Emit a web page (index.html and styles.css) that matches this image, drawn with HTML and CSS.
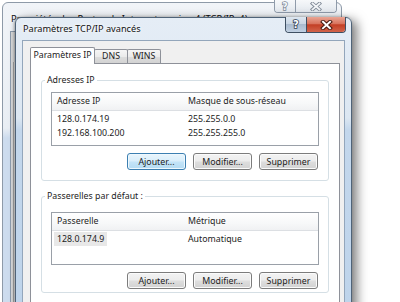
FILE: index.html
```html
<!DOCTYPE html>
<html lang="fr">
<head>
<meta charset="utf-8">
<title>Paramètres TCP/IP avancés</title>
<link rel="stylesheet" href="styles.css">
</head>
<body>
<div class="desktop">
  <div class="win back">
    <div class="titlebar back-titlebar">
      <span class="title back-title">Propriétés de : Protocole Internet version 4 (TCP/IPv4)</span>
      <div class="caption back-caption">
        <span class="cbtn help"><svg width="10" height="10" viewBox="0 0 10 10"><text x="5" y="8.5" text-anchor="middle" class="qmark qmark-inactive">?</text></svg></span>
        <span class="cbtn close"><svg width="12" height="9" viewBox="0 0 12 9"><path d="M2.5 1.5 L9.5 7.5 M9.5 1.5 L2.5 7.5" class="x-out x-out-inactive"/><path d="M2.5 1.5 L9.5 7.5 M9.5 1.5 L2.5 7.5" class="x-in x-in-inactive"/></svg></span>
      </div>
    </div>
    <div class="back-client"><div class="back-panel"></div></div>
  </div>

  <div class="win front">
    <div class="titlebar">
      <span class="title">Paramètres TCP/IP avancés</span>
      <div class="caption">
        <span class="cbtn help"><svg width="10" height="11" viewBox="0 0 10 11"><text x="5" y="9" text-anchor="middle" class="qmark">?</text></svg></span>
        <span class="cbtn close"><svg width="13" height="10" viewBox="0 0 13 10"><path d="M3 1.8 L10 8.2 M10 1.8 L3 8.2" class="x-out"/><path d="M3 1.8 L10 8.2 M10 1.8 L3 8.2" class="x-in"/></svg></span>
      </div>
    </div>
    <div class="client">
      <div class="tabs">
        <div class="tab active">Paramètres IP</div>
        <div class="tab">DNS</div>
        <div class="tab">WINS</div>
      </div>
      <div class="panel">
        <fieldset class="group group-ip">
          <legend>Adresses IP</legend>
          <div class="list">
            <div class="row head"><span class="c1">Adresse IP</span><span class="c2">Masque de sous-réseau</span></div>
            <div class="rows">
              <div class="row"><span class="c1">128.0.174.19</span><span class="c2">255.255.0.0</span></div>
              <div class="row"><span class="c1">192.168.100.200</span><span class="c2">255.255.255.0</span></div>
            </div>
          </div>
          <div class="buttons">
            <button class="btn default">Ajouter...</button>
            <button class="btn">Modifier...</button>
            <button class="btn">Supprimer</button>
          </div>
        </fieldset>
        <fieldset class="group group-gw">
          <legend>Passerelles par défaut :</legend>
          <div class="list list-gw">
            <div class="row head"><span class="c1">Passerelle</span><span class="c2">Métrique</span></div>
            <div class="rows">
              <div class="row"><span class="c1"><span class="sel">128.0.174.9</span></span><span class="c2">Automatique</span></div>
            </div>
          </div>
          <div class="buttons">
            <button class="btn">Ajouter...</button>
            <button class="btn">Modifier...</button>
            <button class="btn">Supprimer</button>
          </div>
        </fieldset>
      </div>
    </div>
  </div>
</div>
</body>
</html>
```

FILE: styles.css
```css
* { box-sizing: border-box; }
html, body { margin: 0; padding: 0; background: #fff; }
body { font-family: "Noto Sans", "Open Sans", sans-serif; font-size: 8.8px; color: #1c1c1c; }

.desktop {
  position: relative;
  width: 400px;
  height: 302px;
  overflow: hidden;
  background: #fff;
}

/* ---------- windows ---------- */
.win {
  position: absolute;
  display: flex;
  flex-direction: column;
  border-radius: 6px 6px 0 0;
}

.back {
  left: 2px;
  top: 2px;
  width: 340px;
  height: 330px;
  border: 1px solid #8e9aa8;
  padding: 0 4px 0 7px;
  background: linear-gradient(180deg, #f1f4f8 0, #e9eef4 125px, #cddcee 135px, #cddcee 100%);
}

.front {
  left: 15px;
  top: 17px;
  width: 337px;
  height: 300px;
  border: 1px solid #4f6378;
  padding: 0 6px;
  background: linear-gradient(180deg, #e5edf6 0, #dce7f2 100px, #c3d7ec 112px, #bed4eb 100%);
  box-shadow: 5px 3px 11px rgba(0, 0, 0, 0.5), -1px 0 3px rgba(0, 0, 0, 0.3);
}

.titlebar {
  display: flex;
  align-items: flex-start;
  height: 22px;
  flex: none;
}
.title {
  flex: 1;
  padding: 4px 0 0 1px;
  line-height: 14px;
  font-size: 9.2px;
  color: #111;
  text-shadow: 0 0 5px #fff, 0 0 3px #fff;
  white-space: nowrap;
}
.back-titlebar { height: 24px; }
.back-title { padding-top: 9px; font-size: 9.4px; }

/* caption buttons */
.caption {
  display: flex;
  margin: -1px -1px 0 0;
  height: 16px;
  border: 1px solid #3e4f62;
  border-top: none;
  border-radius: 0 0 4px 4px;
  overflow: hidden;
}
.cbtn {
  display: flex;
  align-items: center;
  justify-content: center;
  height: 100%;
}
.cbtn.help {
  width: 21px;
  border-right: 1px solid #3e4f62;
  background: linear-gradient(180deg, #dde6f0 0, #c9d6e4 45%, #aabbcf 50%, #c0d0e2 100%);
}
.cbtn.close {
  width: 38px;
  background: linear-gradient(180deg, #eaa594 0, #d8735d 45%, #c33f25 52%, #d2644b 100%);
}
.qmark {
  font-family: "DejaVu Sans", sans-serif;
  font-weight: bold;
  font-size: 10px;
  fill: #fff;
  stroke: #334255;
  stroke-width: 1.6px;
  paint-order: stroke;
}
.x-out { stroke: #4a1d14; stroke-width: 4px; stroke-linecap: square; fill: none; }
.x-in { stroke: #fff; stroke-width: 2px; stroke-linecap: square; fill: none; }

.back-caption {
  margin: -3px 0 0 0;
  height: 13px;
  border-color: #8f9baa;
}
.back-caption .cbtn.help {
  width: 21px;
  border-right-color: #8f9baa;
  background: linear-gradient(180deg, #f6f8fa, #e3e8ee);
}
.back-caption .cbtn.close {
  width: 40px;
  background: linear-gradient(180deg, #f6f8fa, #e3e8ee);
}
.qmark-inactive { fill: #f4f6f9; stroke: #7b8794; stroke-width: 1.4px; }
.x-out-inactive { stroke: #7f8a97; stroke-width: 3.6px; }
.x-in-inactive { stroke: #f4f6f9; stroke-width: 1.8px; }

.back-client {
  flex: 1;
  margin-top: 4px;
  background: #d9dadb;
  border: 1px solid #8c9bac;
  padding: 30px 0 0 2px;
}
.back-panel {
  height: 100%;
  border-left: 1px solid #a8a8a8;
  background: #ececec;
}

/* ---------- client area ---------- */
.client {
  flex: 1;
  display: flex;
  flex-direction: column;
  background: #f0f0f0;
  border: 1px solid #93a6bb;
  padding: 6px 4px 0 7px;
}

.tabs {
  display: flex;
  align-items: flex-end;
  height: 16px;
  flex: none;
  position: relative;
  z-index: 1;
}
.tab {
  height: 14px;
  line-height: 13px;
  text-align: center;
  border: 1px solid #8e9199;
  border-bottom: none;
  background: linear-gradient(180deg, #f5f5f5 0, #ebebeb 50%, #dddddd 51%, #d3d3d3 100%);
  margin-left: -1px;
  width: 34px;
  color: #222;
  border-radius: 2px 2px 0 0;
}
.tab.active {
  height: 17px;
  width: 65px;
  margin-left: 0;
  margin-bottom: -1px;
  line-height: 15px;
  background: #fff;
  position: relative;
  z-index: 2;
}

.panel {
  flex: 1;
  background: #fff;
  border: 1px solid #8e9199;
  padding: 9px 10px 0 10px;
}

/* ---------- group boxes ---------- */
.group {
  margin: 0;
  border: 1px solid #d5dfe5;
  border-radius: 3px;
  padding: 5px 9px 10px 9px;
  min-width: 0;
}
.group legend {
  margin-left: -6px;
  padding: 0 2px;
  line-height: 14px;
  color: #1c1c1c;
}
.group-gw {
  margin-top: 8px;
  padding-top: 9px;
  padding-bottom: 3px;
}

/* ---------- list views ---------- */
.list {
  height: 54px;
  border: 1px solid #9aa0a8;
  background: #fff;
}
.list-gw { height: 53px; }
.row {
  display: flex;
  height: 14px;
  line-height: 14px;
  white-space: nowrap;
}
.row.head {
  height: 18px;
  line-height: 17px;
  border-bottom: 1px solid #dcdfe3;
  background: linear-gradient(180deg, #ffffff 0, #f7f8f9 60%, #f0f1f3 100%);
}
.rows { padding-top: 1px; }
.c1 { width: 131px; padding-left: 5px; flex: none; }
.c2 { padding-left: 5px; }
.sel {
  display: inline-block;
  background: #e8e8e8;
  margin-left: -3px;
  padding: 0 3px;
}

/* ---------- buttons ---------- */
.buttons {
  display: flex;
  justify-content: flex-end;
  gap: 7px;
  margin-top: 7px;
  padding-right: 1px;
}
.btn {
  width: 59px;
  height: 17px;
  padding: 0;
  font-family: inherit;
  font-size: 8.8px;
  color: #1c1c1c;
  border: 1px solid #7c7c7c;
  border-radius: 3px;
  background: linear-gradient(180deg, #f3f3f3 0, #ececec 48%, #dedede 52%, #d2d2d2 100%);
  box-shadow: inset 0 0 0 1px #fbfbfb;
}
.btn.default {
  border-color: #3c7fb1;
  background: linear-gradient(180deg, #e9f5fc 0, #d9eefb 48%, #c4e4f8 52%, #b4dbf3 100%);
  box-shadow: inset 0 0 0 1px #eef8fe;
}
```
